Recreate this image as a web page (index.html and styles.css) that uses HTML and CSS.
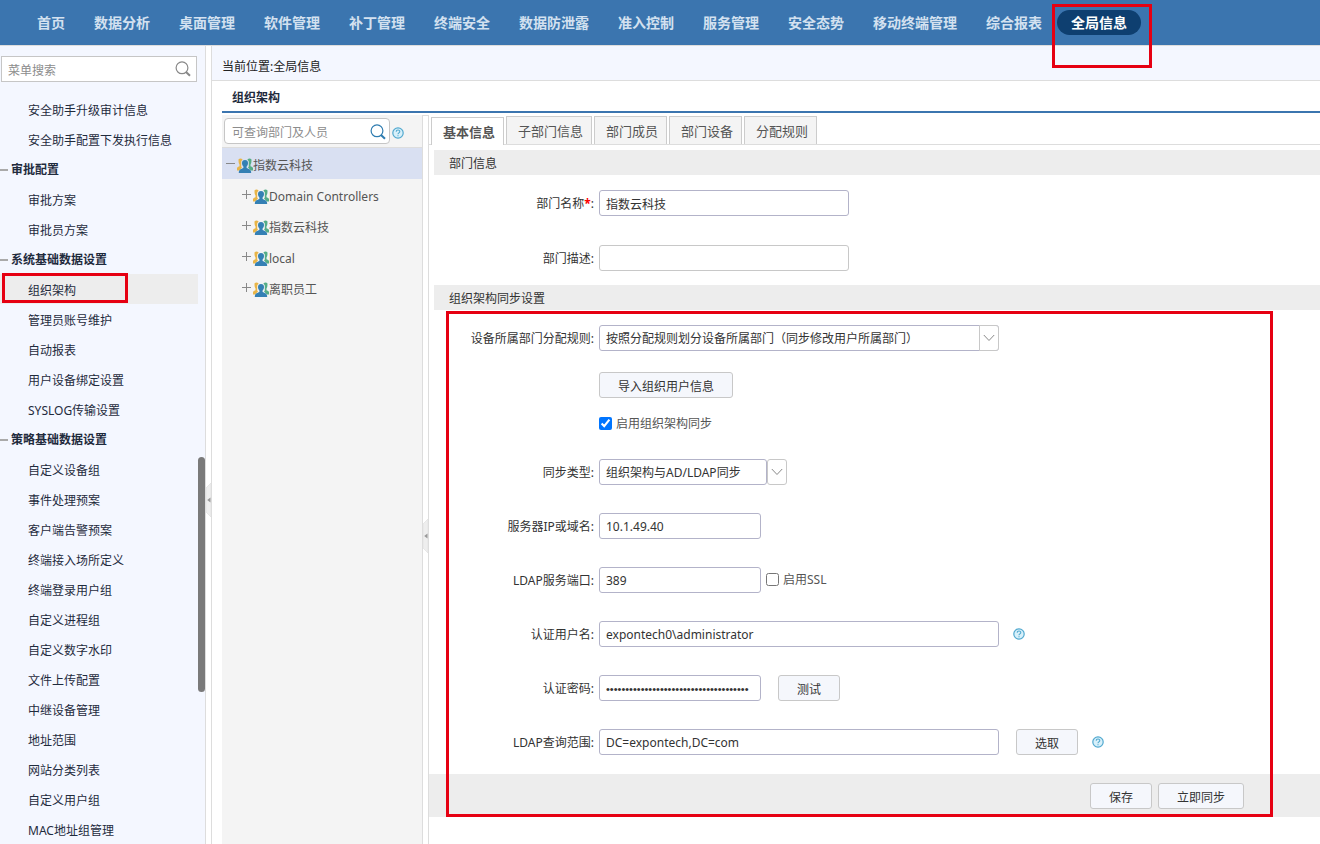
FILE: index.html
```html
<!DOCTYPE html>
<html lang="zh-CN">
<head>
<meta charset="utf-8">
<meta name="viewport" content="width=device-width, initial-scale=1">
<title>组织架构</title>
<link rel="stylesheet" href="styles.css">
</head>
<body>
<svg class="defs" aria-hidden="true">
  <symbol id="i-search" viewBox="0 0 16 16"><circle cx="7" cy="6.8" r="5.9" fill="none" stroke="currentColor" stroke-width="1.2"/><path d="M11 11l4 3.8" stroke="currentColor" stroke-width="2" fill="none"/></symbol>
  <symbol id="i-help" viewBox="0 0 12 12"><circle cx="6" cy="6" r="5.2" fill="#d8f0fa" stroke="#52a9cf" stroke-width="1.2"/><path d="M4.2 4.8C4.2 2.5 7.8 2.5 7.8 4.6C7.8 5.9 6 5.8 6 7.2M6 8.2v1.1" fill="none" stroke="#52a9cf" stroke-width="1.1"/></symbol>
  <symbol id="i-users" viewBox="0 0 16 15">
    <path d="M1.600 1.200Q3.200-.2 5.600 1.200L4.200 3.400v5l.8 1-2.800 3.100H0V10q.3-1.200 2.500-1.800V6.500Q1.200 5 1.600 1.200z" fill="#e8b547"/>
    <path d="M14.400 1.200Q12.800-.2 10.400 1.200L11.800 3.400v5l-.8 1 2.800 3.100H16V10q-.3-1.200-2.500-1.800V6.500Q14.800 5 14.400 1.200z" fill="#55ad86"/>
    <path d="M8 2C6 2 5 3 5 5c0 1.500.5 2.700 1.400 3.500V10C5 11 1.800 10.800 1.800 15h12.400c0-4.200-3.200-4-4.600-5V8.500C10.500 7.700 11 6.500 11 5c0-2-1-3-3-3z" fill="#3480b4"/>
  </symbol>
  <symbol id="i-down" viewBox="0 0 12 8"><path d="M.8 1l5.200 5.500L11.200 1" fill="none" stroke="currentColor" stroke-width="1"/></symbol>
  <symbol id="i-grip" viewBox="0 0 5 34"><path d="M5 0L0 5v24l5 5z" fill="#eee" stroke="#ddd" stroke-width=".6"/><path d="M4.500 14.500v5L1.200 17z" fill="#999"/></symbol>
</svg>

<header class="topbar">
  <nav class="nav">
    <a href="#">首页</a><a href="#">数据分析</a><a href="#">桌面管理</a><a href="#">软件管理</a><a href="#">补丁管理</a><a href="#">终端安全</a><a href="#">数据防泄露</a><a href="#">准入控制</a><a href="#">服务管理</a><a href="#">安全态势</a><a href="#">移动终端管理</a><a href="#">综合报表</a><a href="#" class="active" aria-current="page">全局信息<span class="mark mark-nav"></span></a>
  </nav>
</header>

<div class="shell">
  <aside class="sidebar">
    <div class="menu-search">
      <input type="text" placeholder="菜单搜索" aria-label="菜单搜索">
      <svg class="ic-search"><use href="#i-search"/></svg>
    </div>
    <nav class="menu">
      <a href="#">安全助手升级审计信息</a>
      <a href="#">安全助手配置下发执行信息</a>
      <h2>审批配置</h2>
      <a href="#">审批方案</a>
      <a href="#">审批员方案</a>
      <h2>系统基础数据设置</h2>
      <a href="#" class="current">组织架构<span class="mark mark-menu"></span></a>
      <a href="#">管理员账号维护</a>
      <a href="#">自动报表</a>
      <a href="#">用户设备绑定设置</a>
      <a href="#">SYSLOG传输设置</a>
      <h2>策略基础数据设置</h2>
      <a href="#">自定义设备组</a>
      <a href="#">事件处理预案</a>
      <a href="#">客户端告警预案</a>
      <a href="#">终端接入场所定义</a>
      <a href="#">终端登录用户组</a>
      <a href="#">自定义进程组</a>
      <a href="#">自定义数字水印</a>
      <a href="#">文件上传配置</a>
      <a href="#">中继设备管理</a>
      <a href="#">地址范围</a>
      <a href="#">网站分类列表</a>
      <a href="#">自定义用户组</a>
      <a href="#">MAC地址组管理</a>
    </nav>
    <span class="thumb"></span>
  </aside>
  <div class="splitter outer"><svg><use href="#i-grip"/></svg></div>

  <main class="main">
    <div class="crumb">当前位置:全局信息</div>
    <div class="body">
      <h1 class="title">组织架构</h1>
      <div class="panes">
        <section class="tree">
          <div class="tree-search">
            <div class="tree-box">
              <input type="text" placeholder="可查询部门及人员" aria-label="可查询部门及人员">
              <svg class="ic-search"><use href="#i-search"/></svg>
            </div>
            <svg class="help"><use href="#i-help"/></svg>
          </div>
          <ul class="nodes">
            <li class="selected"><span class="tog minus"></span><svg class="users"><use href="#i-users"/></svg>指数云科技</li>
            <li class="child"><span class="tog plus"></span><svg class="users"><use href="#i-users"/></svg>Domain Controllers</li>
            <li class="child"><span class="tog plus"></span><svg class="users"><use href="#i-users"/></svg>指数云科技</li>
            <li class="child"><span class="tog plus"></span><svg class="users"><use href="#i-users"/></svg>local</li>
            <li class="child"><span class="tog plus"></span><svg class="users"><use href="#i-users"/></svg>离职员工</li>
          </ul>
        </section>
        <div class="splitter inner"><svg><use href="#i-grip"/></svg></div>

        <section class="detail">
          <div class="tabs" role="tablist">
            <button type="button" role="tab" aria-selected="true" class="on">基本信息</button>
            <button type="button" role="tab">子部门信息</button>
            <button type="button" role="tab">部门成员</button>
            <button type="button" role="tab">部门设备</button>
            <button type="button" role="tab">分配规则</button>
          </div>
          <form>
            <h2 class="sec">部门信息</h2>
            <div class="rows info">
              <div class="row"><label for="name">部门名称<b class="req">*</b>:</label><input id="name" class="w-md" type="text" value="指数云科技"></div>
              <div class="row"><label for="desc">部门描述:</label><input id="desc" class="w-md plain" type="text"></div>
            </div>
            <h2 class="sec">组织架构同步设置</h2>
            <div class="sync">
              <div class="rows">
                <div class="row"><label for="rule">设备所属部门分配规则:</label>
                  <span class="pick w-lg"><select id="rule"><option>按照分配规则划分设备所属部门（同步修改用户所属部门）</option></select><span class="arrow"><svg><use href="#i-down"/></svg></span></span></div>
                <div class="row import"><button type="button" class="btn">导入组织用户信息</button></div>
                <div class="row enable"><input type="checkbox" id="en" checked><label class="opt" for="en">启用组织架构同步</label></div>
                <div class="row"><label for="type">同步类型:</label>
                  <span class="pick split"><select id="type"><option>组织架构与AD/LDAP同步</option></select><span class="arrow"><svg><use href="#i-down"/></svg></span></span></div>
                <div class="row"><label for="ip">服务器IP或域名:</label><input id="ip" class="w-sm latin" type="text" value="10.1.49.40"></div>
                <div class="row"><label for="port">LDAP服务端口:</label><input id="port" class="w-sm latin" type="text" value="389"><input type="checkbox" id="ssl"><label class="opt" for="ssl">启用SSL</label></div>
                <div class="row"><label for="user">认证用户名:</label><input id="user" class="w-lg latin" type="text" value="expontech0\administrator"><svg class="help after"><use href="#i-help"/></svg></div>
                <div class="row"><label for="pwd">认证密码:</label><input id="pwd" class="w-sm" type="password" value="1234567890123456789012345678901234567"><button type="button" class="btn short after">测试</button></div>
                <div class="row"><label for="scope">LDAP查询范围:</label><input id="scope" class="w-lg latin" type="text" value="DC=expontech,DC=com"><button type="button" class="btn short after">选取</button><svg class="help after"><use href="#i-help"/></svg></div>
              </div>
              <div class="actions"><button type="submit" class="btn short">保存</button><button type="button" class="btn">立即同步</button></div>
              <span class="mark mark-sync"></span>
            </div>
          </form>
        </section>
      </div>
    </div>
  </main>
</div>
</body>
</html>
```
FILE: styles.css
```css
* { box-sizing: border-box; }
body {
  margin: 0;
  height: 100vh;
  display: flex;
  flex-direction: column;
  overflow: hidden;
  font: 12px/20px "Noto Sans", "Noto Sans CJK SC", sans-serif;
  color: #333;
  background: #fff;
}
a { color: inherit; text-decoration: none; }
h1, h2, ul { margin: 0; padding: 0; list-style: none; font-size: 12px; }
input, select, button { font: inherit; color: inherit; margin: 0; }
svg { display: block; flex: none; }
.defs { position: absolute; width: 0; height: 0; }
.mark { position: absolute; border: 3px solid #e60012; pointer-events: none; }

/* top navigation */
.topbar { flex: none; height: 46px; background: #3b75af; border-bottom: 1px solid #ddd; padding: 10px 23px; }
.nav { display: flex; gap: 1px; white-space: nowrap; }
.nav a { position: relative; height: 25px; padding: 0 14px; border-radius: 13px; font-size: 14px; line-height: 26px; font-weight: 700; color: #d3e1f0; }
.nav .active { background: #0e3f70; color: #fff; }
.mark-nav { left: -5px; right: -11px; top: -6px; height: 64px; }

/* side menu */
.shell { flex: 1; min-height: 0; display: flex; }
.sidebar { position: relative; width: 206px; flex: none; background: #f4f7ff; border-right: 1px solid #ddd; padding-top: 10px; }
.menu-search { display: flex; align-items: center; width: 196px; height: 26px; margin: 0 0 12px 1px; padding: 0 5px 0 6px; border: 1px solid #c6c6c6; background: #fff; }
.menu-search input, .tree-box input { flex: 1; min-width: 0; border: 0; padding: 3px 0 0; outline: 0; background: none; }
::placeholder { color: #8c8c8c; opacity: 1; }
.ic-search { width: 16px; height: 16px; color: #888; }
.menu a, .menu h2 { position: relative; display: block; height: 30px; line-height: 33px; padding-left: 28px; margin-right: 7px; color: #1f2b3d; }
.menu h2 { display: flex; align-items: center; gap: 3px; padding: 2px 0 0; line-height: 20px; }
.menu h2::before { content: ""; width: 8px; height: 2px; background: #aaa; }
.menu .current { background: #ededed; }
.mark-menu { left: 2px; top: -1px; width: 126px; height: 30px; }
.thumb { position: absolute; right: 0; top: 411px; width: 7px; height: 235px; border-radius: 4px; background: #7a7a7a; }
.splitter { flex: none; width: 5px; background: #fff; display: flex; flex-direction: column; justify-content: center; }
.splitter svg { width: 5px; height: 34px; }
.outer svg { margin-bottom: -110px; }

/* main area */
.main { flex: 1; min-width: 0; display: flex; flex-direction: column; border-left: 1px solid #ddd; }
.crumb { flex: none; height: 35px; padding: 0 10px; background: #f4f7ff; border-bottom: 1px solid #ddd; color: #222; line-height: 41px; }
.body { flex: 1; min-height: 0; padding-left: 10px; display: flex; flex-direction: column; }
.title { flex: none; height: 32px; line-height: 33px; padding-left: 10px; border-bottom: 2px solid #3b75af; color: #1f2b3d; }
.panes { flex: 1; min-height: 0; display: flex; padding-top: 2px; }

/* department tree */
.tree { width: 200px; flex: none; background: #f4f4f4; }
.tree-search { display: flex; align-items: center; gap: 2px; height: 33px; padding: 3px 2px; border-bottom: 1px solid #ddd; }
.tree-box { display: flex; align-items: center; width: 166px; height: 26px; padding: 1px 3px 0 7px; border: 1px solid #c6c6c6; border-radius: 4px; background: #fff; }
.tree-box .ic-search { color: #2e7cb0; }
.help { width: 12px; height: 12px; }
.tree-search .help { margin-top: 3px; }
.nodes li { display: flex; align-items: center; height: 31px; padding: 4px 0 0 4px; color: #555; white-space: nowrap; }
.nodes .child { padding-left: 20px; }
.nodes .selected { background: #d9e0f2; }
.users { width: 16px; height: 15px; }
.tog { position: relative; width: 11px; height: 13px; }
.tog::before, .plus::after { content: ""; position: absolute; background: #888; }
.tog::before { left: 0; top: 4px; width: 9px; height: 1px; }
.plus::after { left: 4px; top: 0; width: 1px; height: 9px; }
.inner { width: 7px; border: 1px solid #ddd; border-bottom: 0; }
.inner svg { margin-bottom: -112px; }

/* detail pane */
.detail { flex: 1; min-width: 0; }
.tabs { display: flex; align-items: flex-end; gap: 2px; height: 30px; padding: 1px 2px 0; border-bottom: 1px solid #ddd; }
.tabs button { height: 28px; padding: 0 8px 0 11px; border: 1px solid #ccc; border-bottom: 0; background: #f4f4f4; font-size: 13px; line-height: 28px; color: #555; white-space: nowrap; }
.tabs .on { background: #fff; font-weight: 700; margin-bottom: -1px; }
.sec { height: 25px; margin-left: 5px; padding-left: 15px; background: #ededed; font-weight: 400; line-height: 28px; }
.tabs + form { padding-top: 5px; }
.rows { display: flex; flex-direction: column; gap: 28px; padding: 15px 0 19px; }
.info { gap: 29px; padding-bottom: 14px; }
.row { display: flex; align-items: center; height: 26px; }
.row > label:first-child { width: 165px; margin-right: 5px; padding-top: 2px; text-align: right; white-space: nowrap; }
.req { color: #f00; line-height: 1; }
.row input[type=text], .row input[type=password], .pick select { height: 26px; padding: 2px 6px 0; border: 1px solid #b3b3c9; border-radius: 3px; background: #fff; outline: 0; }
.row input.plain { border-color: #c8c8c8; }
.row input.latin { padding-top: 0; }
.row input[type=password] { font: 11px "Liberation Sans", sans-serif; }
.w-sm { width: 162px; }
.w-md { width: 250px; }
.w-lg { width: 400px; }
.import, .enable { padding-left: 170px; }
.import { margin-top: -7px; }
.enable { margin: -15px 0 -6px; }
.row input[type=checkbox] { width: 13px; height: 13px; margin: 0 4px 2px 5px; }
.row.enable input[type=checkbox] { margin-left: 0; }
.opt { color: #555; }
.pick { position: relative; display: block; }
.pick select { display: block; width: 100%; padding-right: 22px; appearance: none; }
.arrow { position: absolute; right: 0; top: 0; width: 20px; height: 26px; display: flex; align-items: center; justify-content: center; border: 1px solid #c8c8c8; border-radius: 0 3px 3px 0; background: #fff; pointer-events: none; color: #888; }
.arrow svg { width: 12px; height: 8px; }
.split { width: 188px; padding-right: 20px; }
.split select { padding-right: 6px; }
.split .arrow { border-radius: 3px; }
.btn { height: 26px; padding: 4px 18px 0; border: 1px solid #c8c8c8; border-radius: 3px; background: #f5f7fc; white-space: nowrap; }
.short { width: 62px; }
.after { margin-left: 17px; }
.help.after { margin-left: 14px; }
.sync { position: relative; }
.actions { display: flex; justify-content: flex-end; gap: 6px; height: 43px; padding: 9px 76px 0 0; background: #ededed; }
.mark-sync { left: 17px; right: 47px; top: 1px; bottom: 0; }
```
